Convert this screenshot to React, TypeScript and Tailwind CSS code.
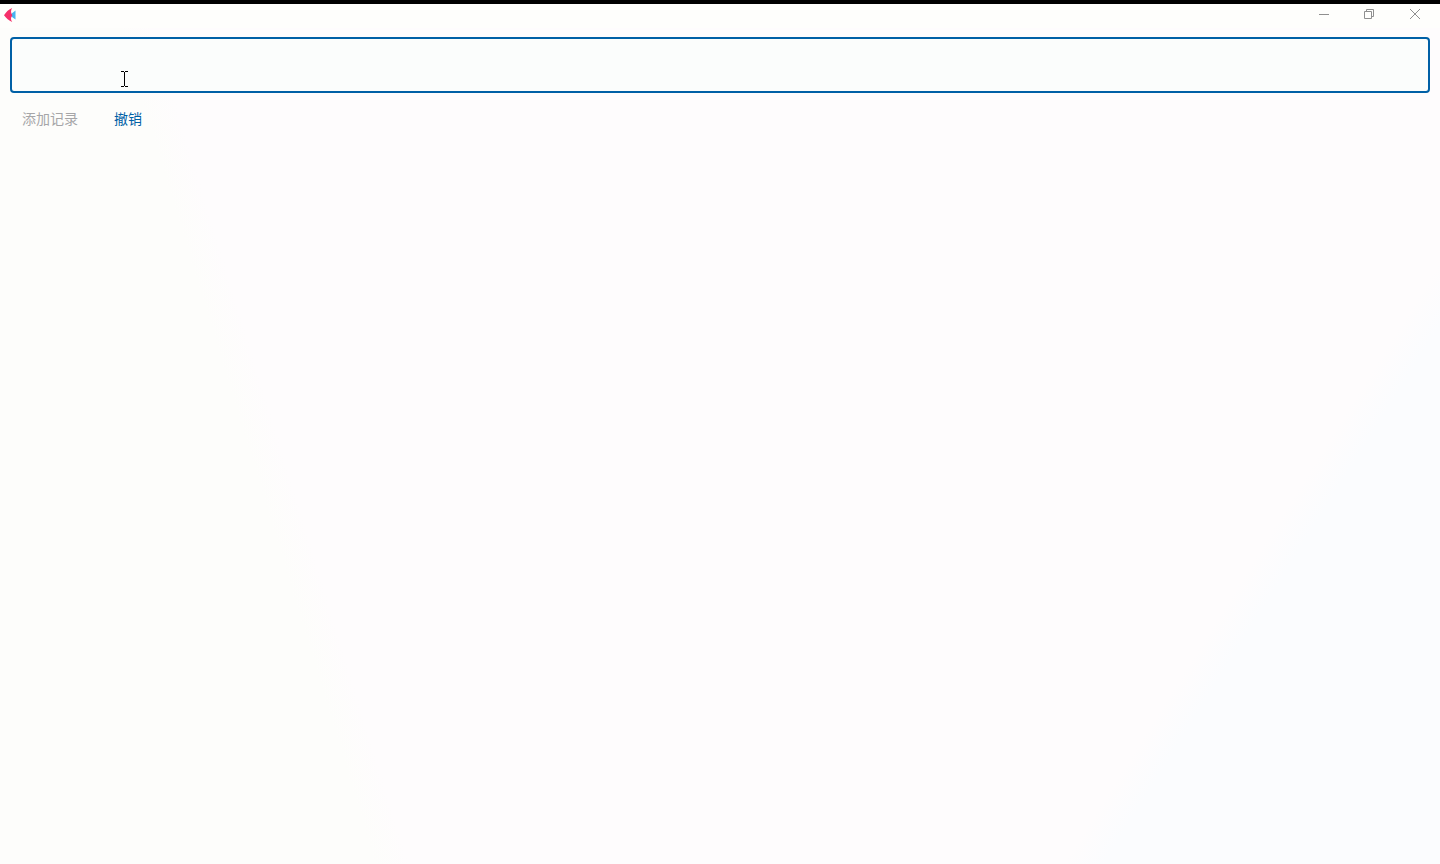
import { useState } from 'react';
import type { ReactNode } from 'react';

function Logo() {
  return (
    <svg width="12" height="14" viewBox="0 0 12 14" aria-hidden="true">
      <path d="M11.5 2.6 5.5 7.2 11.5 11.6z" fill="#45b4f0" />
      <path d="M8.2 0C6.6 2.4 6.6 4.8 8.4 7.2 6.6 9.6 6.6 11.6 8.2 14 5 12.8 2 10 0 7.2 2 4 5 1.2 8.2 0z" fill="#f5306a" />
    </svg>
  );
}

function WindowButton({ label, children }: { label: string; children: ReactNode }) {
  return (
    <button type="button" aria-label={label} className="flex h-5 w-[46px] items-center justify-center">
      <svg
        width="12"
        height="12"
        viewBox="0 0 12 12"
        fill="none"
        stroke="#8f8f8f"
        strokeWidth="1"
        aria-hidden="true"
      >
        {children}
      </svg>
    </button>
  );
}

function TitleBar() {
  return (
    <header className="flex h-7 items-start justify-between border-t-4 border-black bg-[#fefefc] pr-0.5 pl-1">
      <div className="flex h-[22px] items-center">
        <Logo />
      </div>
      <div className="flex">
        <WindowButton label="最小化">
          <path d="M2 6.5h10" />
        </WindowButton>
        <WindowButton label="还原">
          <path d="M1.5 3.5h7v7h-7zM3.5 3.5v-2h7v7h-2" />
        </WindowButton>
        <WindowButton label="关闭">
          <path d="M1 1l10 10M11 1L1 11" />
        </WindowButton>
      </div>
    </header>
  );
}

/** Text cursor hovering over the input. */
function Caret() {
  return (
    <svg
      width="7"
      height="16"
      viewBox="0 0 7 16"
      className="pointer-events-none absolute top-[34px] left-[111px]"
      fill="none"
      stroke="#000000"
      aria-hidden="true"
    >
      <path d="M0 .5h3M4 .5h3M3.5 1v14M0 15.5h3M4 15.5h3" />
    </svg>
  );
}

export default function App() {
  const [text, setText] = useState('');

  return (
    <div className="min-h-screen bg-[#fefcfd] bg-[linear-gradient(73deg,#fdfdfb_22%,transparent_24%),linear-gradient(122deg,transparent_81%,#fbfcfe_83%)] font-['Noto_Sans_CJK_SC',sans-serif]">
      <TitleBar />
      <main className="px-2.5 pt-[9px]">
        <div className="relative">
          <input
            type="text"
            aria-label="记录"
            value={text}
            onChange={(e) => setText(e.target.value)}
            className="block h-14 w-full rounded border-2 border-[#0060a6] bg-[#fbfdfc] px-3 text-base outline-none"
          />
          <Caret />
        </div>
        <div className="mt-[9px] flex gap-3 text-sm">
          <button type="button" disabled={!text} className="h-8 px-3 text-[#0060a6] disabled:text-[#a6a6a8]">
            添加记录
          </button>
          <button type="button" onClick={() => setText('')} className="h-8 px-3 text-[#0060a6]">
            撤销
          </button>
        </div>
      </main>
    </div>
  );
}
